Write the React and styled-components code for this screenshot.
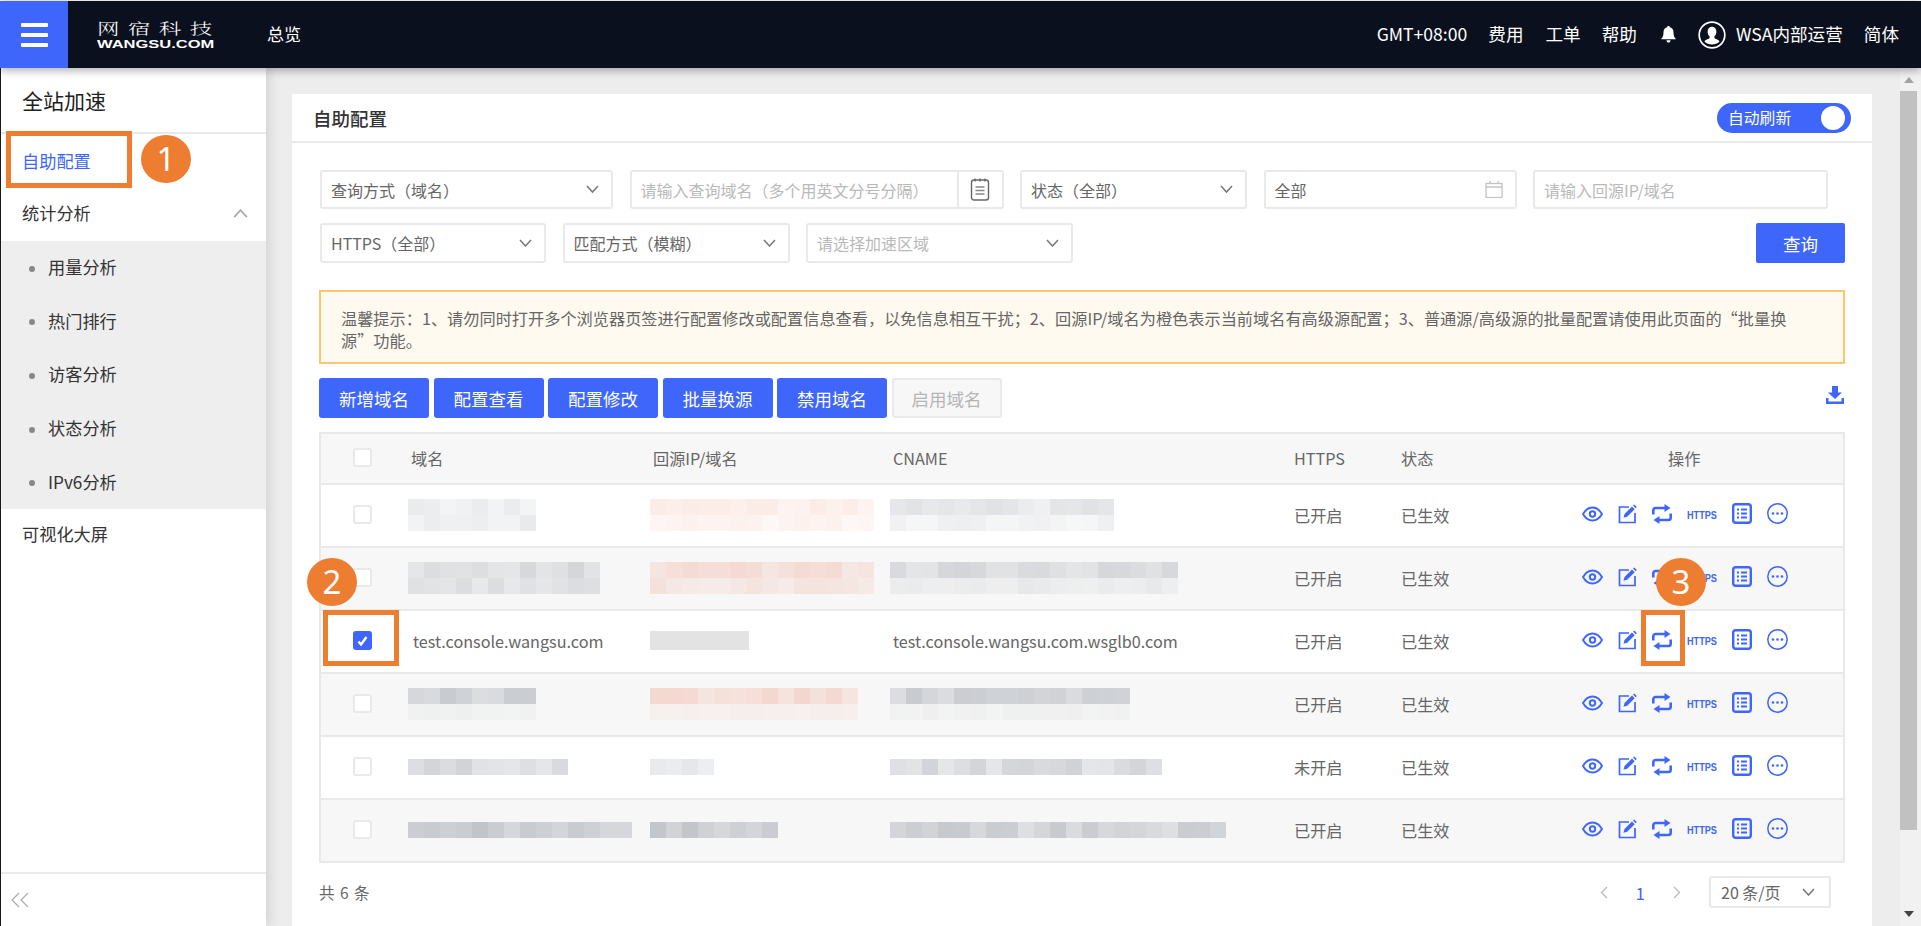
import React from 'react';
import styled, { createGlobalStyle } from 'styled-components';

const blue = '#3e66fb';
const orange = '#ed7d31';
const line = '#e9e9e9';

const GlobalStyle = createGlobalStyle`
	html, body {
		margin: 0;
		padding: 0;
		height: 100%;
		overflow: hidden;
		background: #fff;
		font-family: "Noto Sans CJK SC", "Noto Sans", sans-serif;
		color: #666;
	}
	* {
		box-sizing: border-box;
	}
`;

const Page = styled.div`
	position: relative;
	height: 926px;
	padding-top: 1px;
	display: flex;
	flex-direction: column;
	overflow: hidden;
`;

/* top bar */
const TopBar = styled.header`
	height: 67px;
	flex: none;
	display: flex;
	align-items: center;
	background: #0b101e;
	color: #fff;
	position: relative;
	z-index: 3;
	box-shadow: 0 2px 9px rgba(0, 0, 0, 0.35);
`;
const MenuButton = styled.div`
	width: 68px;
	height: 100%;
	background: ${blue};
	display: flex;
	flex-direction: column;
	justify-content: center;
	align-items: center;
	gap: 6px;
`;
const MenuBar = styled.span`
	width: 27px;
	height: 4px;
	border-radius: 1px;
	background: #fff;
`;
const Logo = styled.div`
	width: 118px;
	margin: 0 52px 0 29px;
	display: flex;
	flex-direction: column;
	align-items: flex-start;
`;
const LogoName = styled.span`
	font-family: "Noto Serif CJK SC", "Noto Sans CJK SC", serif;
	font-size: 15px;
	line-height: 17px;
	font-weight: 300;
	letter-spacing: 5.6px;
	white-space: nowrap;
	transform: scaleX(1.5);
	transform-origin: left center;
`;
const LogoDomain = styled.span`
	font-family: "Liberation Sans", sans-serif;
	font-weight: 700;
	font-size: 11px;
	line-height: 12px;
	margin-top: 2px;
	white-space: nowrap;
	transform: scaleX(1.5);
	transform-origin: left center;
`;
const TopLink = styled.span`
	font-size: ${({ $size }) => $size || 17.6}px;
	line-height: 20px;
	margin-left: ${({ $gap }) => $gap || 0}px;
	margin-bottom: 2px;
	white-space: nowrap;
`;
const TopIcon = styled.span`
	display: flex;
	margin-left: ${({ $gap }) => $gap}px;
`;
const TopRight = styled.div`
	margin-left: auto;
	padding-right: 22px;
	display: flex;
	align-items: center;
`;

/* page body */
const Body = styled.div`
	flex: 1;
	min-height: 0;
	display: flex;
`;
const Sidebar = styled.aside`
	width: 266px;
	flex: none;
	display: flex;
	flex-direction: column;
	background: #fff;
	border-left: 1px solid #1a1a1a;
	position: relative;
	z-index: 2;
	box-shadow: 3px 0 12px rgba(0, 0, 0, 0.12);
	color: #333;
`;
const SideTitle = styled.div`
	height: 66px;
	flex: none;
	padding: 17px 0 0 21px;
	font-size: 21px;
	line-height: 30px;
	color: #222;
	border-bottom: 2px solid ${line};
`;
const SideItem = styled.div`
	height: ${({ $h }) => $h || 54}px;
	flex: none;
	padding-left: 21px;
	display: flex;
	align-items: center;
	justify-content: space-between;
	font-size: 17.2px;
	color: ${({ $active }) => ($active ? blue : '#333')};
`;
const SideGroupLabel = styled.span`
	margin-bottom: 3px;
`;
const SideCaret = styled.span`
	display: flex;
	padding-right: 18px;
`;
const SubMenu = styled.div`
	height: 268px;
	flex: none;
	background: #eee;
	display: flex;
	flex-direction: column;
`;
const SubItem = styled.div`
	height: 53.6px;
	padding: 0 0 2px 47px;
	display: flex;
	align-items: center;
	font-size: 17.2px;
	color: #333;
	position: relative;
	&::before {
		content: '';
		position: absolute;
		left: 28px;
		top: 50%;
		width: 6px;
		height: 6px;
		margin-top: -2px;
		border-radius: 50%;
		background: #888;
	}
`;
const SideFooter = styled.div`
	margin-top: auto;
	height: 54px;
	flex: none;
	border-top: 2px solid ${line};
	padding-left: 10px;
	display: flex;
	align-items: center;
	color: #999;
`;
const Content = styled.main`
	flex: 1;
	min-width: 0;
	background: #ededed;
	padding: 26px 28px 0 26px;
`;
const Card = styled.section`
	background: #fff;
	height: 100%;
	padding: 0 27px 0 27px;
	margin-bottom: -30px;
`;
const CardHeader = styled.div`
	height: 49px;
	margin: 0 -27px;
	padding: 0 21px 0 21px;
	display: flex;
	align-items: center;
	justify-content: space-between;
	border-bottom: 2px solid ${line};
`;
const CardTitle = styled.h2`
	margin: 0;
	font-size: 18.5px;
	font-weight: 500;
	color: #333;
`;
const Toggle = styled.div`
	width: 134px;
	height: 30px;
	border-radius: 15px;
	background: ${blue};
	color: #fff;
	font-size: 15.8px;
	padding: 0 6px 0 11px;
	display: flex;
	align-items: center;
	justify-content: space-between;
`;
const Knob = styled.span`
	width: 24px;
	height: 24px;
	border-radius: 50%;
	background: #fff;
`;

/* filters */
const Filters = styled.div`
	padding: 27px 0 0 1px;
	display: flex;
	flex-direction: column;
	gap: 14px;
`;
const FilterRow = styled.div`
	display: flex;
	height: ${({ $h }) => $h}px;
	gap: 16.5px;
`;
const Field = styled.div`
	width: ${({ $w }) => $w}px;
	height: 100%;
	flex: none;
	border: 2px solid ${line};
	border-radius: 3px;
	background: #fff;
	padding: 0 12px 0 9px;
	display: flex;
	align-items: center;
	justify-content: space-between;
	font-size: 16px;
	white-space: nowrap;
	color: ${({ $empty }) => ($empty ? '#b9b9b9' : '#666')};
`;
const FieldAddon = styled.div`
	width: 45px;
	margin: 0 -12px 0 0;
	align-self: stretch;
	border-left: 2px solid ${line};
	display: flex;
	align-items: center;
	justify-content: center;
`;
const QueryButton = styled.button`
	margin-left: auto;
	width: 89px;
	height: 40px;
	border: 0;
	border-radius: 2px;
	background: ${blue};
	color: #fff;
	font: inherit;
	font-size: 17.5px;
`;
const Notice = styled.div`
	margin-top: 27px;
	height: 74px;
	padding: 15px 50px 0 20px;
	border: 2px solid #fcc671;
	background: #fffaf0;
	font-size: 16.2px;
	line-height: 22px;
	color: #666;
`;

/* toolbar */
const Toolbar = styled.div`
	margin-top: 14px;
	height: 40px;
	display: flex;
	align-items: center;
	gap: 4.5px;
`;
const ToolButton = styled.button`
	width: 110px;
	height: 40px;
	border-radius: 3px;
	border: ${({ disabled }) => (disabled ? `2px solid ${line}` : 0)};
	background: ${({ disabled }) => (disabled ? '#f7f7f7' : blue)};
	color: ${({ disabled }) => (disabled ? '#b5b5b5' : '#fff')};
	font: inherit;
	font-size: 17.5px;
	padding: 0;
`;
const DownloadLink = styled.span`
	margin-left: auto;
	display: flex;
	padding-bottom: 6px;
`;

/* table */
const Table = styled.div`
	margin-top: 14px;
	border: 2px solid ${line};
	border-bottom-width: 0;
`;
const Row = styled.div`
	display: grid;
	grid-template-columns: 87px 242px 240px 404px 107px 181px 1fr;
	height: ${({ $h }) => $h || 63}px;
	padding-bottom: 2px;
	align-items: center;
	border-bottom: 2px solid ${line};
	background: ${({ $tint }) => ($tint ? '#f7f7f7' : '#fff')};
	font-size: 16.2px;
	color: #666;
`;
const CheckCell = styled.div`
	display: flex;
	justify-content: center;
	padding-right: 4px;
`;
const CheckBox = styled.span`
	width: 19px;
	height: 19px;
	border-radius: 3px;
	border: ${({ $on }) => ($on ? '0' : `2px solid ${line}`)};
	background: ${({ $on }) => ($on ? blue : '#fff')};
	display: flex;
	align-items: center;
	justify-content: center;
`;
const TextCell = styled.div`
	padding-left: ${({ $pad }) => $pad ?? 3}px;
	white-space: nowrap;
`;
const Mosaic = styled.div`
	display: flex;
	flex-direction: column;
`;
const MosaicLine = styled.div`
	display: flex;
`;
const Tile = styled.i`
	width: 16px;
	height: 16px;
`;
const Masked = styled.div`
	width: 99px;
	height: 19px;
	background: #e3e3e3;
`;
const Actions = styled.div`
	display: flex;
	align-items: center;
	gap: 15px;
	padding-bottom: 2px;
	color: ${blue};
`;
const HttpsTag = styled.span`
	width: 30px;
	font-family: "Liberation Sans", sans-serif;
	font-weight: 700;
	font-size: 11px;
	line-height: 12px;
	white-space: nowrap;
	padding-top: 2px;
	transform: scaleX(0.83);
	transform-origin: left center;
`;

/* pager */
const Footer = styled.div`
	height: 58px;
	display: flex;
	align-items: center;
	font-size: 15.5px;
`;
const Total = styled.span`
	letter-spacing: 1px;
`;
const Pager = styled.div`
	margin-left: auto;
	display: flex;
	align-items: center;
	padding-right: 14px;
`;
const PageNumber = styled.span`
	color: ${blue};
	font-size: 17px;
	margin: 0 28px;
`;
const SizeSelect = styled.div`
	width: 122px;
	height: 32px;
	margin-left: 28px;
	border: 2px solid ${line};
	border-radius: 3px;
	padding: 0 14px 0 10px;
	display: flex;
	align-items: center;
	justify-content: space-between;
	font-size: 16px;
	color: #666;
`;

/* fake browser scrollbar */
const ScrollTrack = styled.div`
	width: 21px;
	flex: none;
	background: #f1f1f1;
	display: flex;
	flex-direction: column;
	align-items: center;
	padding: 9px 4px 9px 0;
`;
const ScrollThumb = styled.div`
	width: 17px;
	height: 739px;
	margin-top: 8px;
	background: #c1c1c1;
`;
const ScrollArrow = styled.span`
	width: 0;
	height: 0;
	border-left: 5px solid transparent;
	border-right: 5px solid transparent;
	${({ $down }) => ($down ? 'border-top: 6px solid #444; margin-top: auto;' : 'border-bottom: 6px solid #a3a3a3;')}
`;

/* orange tutorial marks laid over the page */
const Frame = styled.div`
	position: absolute;
	left: ${({ $x }) => $x}px;
	top: ${({ $y }) => $y}px;
	width: ${({ $w }) => $w}px;
	height: ${({ $h }) => $h}px;
	border: 5px solid ${orange};
	z-index: 5;
`;
const Badge = styled.div`
	position: absolute;
	left: ${({ $x }) => $x}px;
	top: ${({ $y }) => $y}px;
	width: 50px;
	height: 48px;
	border-radius: 50%;
	background: ${orange};
	color: #fff;
	font-family: "Noto Sans", sans-serif;
	font-size: 33px;
	line-height: 47px;
	text-align: center;
	z-index: 5;
`;

const Chevron = ({ up, size = 13, color = '#777' }) => (
	<svg width={size} height={size * 0.62} viewBox="0 0 13 8" fill="none" stroke={color} strokeWidth="1.5">
		<path d={up ? 'M1 7l5.5-6L12 7' : 'M1 1l5.5 6L12 1'} />
	</svg>
);

const Side = ({ left, color = '#bbb' }) => (
	<svg width="8" height="13" viewBox="0 0 8 13" fill="none" stroke={color} strokeWidth="1.4">
		<path d={left ? 'M7 1L1.5 6.5 7 12' : 'M1 1l5.5 5.5L1 12'} />
	</svg>
);

const Bell = () => (
	<svg width="15" height="17" viewBox="0 0 15 17" fill="#fff">
		<path d="M7.5 0c.8 0 1.3.5 1.4 1.2C11.300 1.800 12.500 3.700 12.500 6.200c0 3.100.6 4.900 2.100 6.300.3.300.1.800-.3.800H.7c-.4 0-.6-.5-.3-.8 1.500-1.400 2.100-3.200 2.100-6.300 0-2.500 1.200-4.400 3.600-5C6.200.5 6.700 0 7.500 0z" />
		<path d="M5.500 14.300h4c0 1.400-.9 2.300-2 2.300s-2-.9-2-2.300z" />
	</svg>
);

const UserIcon = () => (
	<svg width="28" height="28" viewBox="0 0 28 28" fill="none">
		<circle cx="14" cy="14" r="12.8" stroke="#fff" strokeWidth="1.7" />
		<path
			d="M14 5.800c2.700 0 4.400 2.100 4.400 4.900 0 1.900-.8 3.700-2 4.700v1c0 .6.400 1 1 1.300l2.800 1.200c.8.400 1.200 1 1.200 1.800-1.900 1.700-4.500 2.800-7.400 2.800s-5.500-1.100-7.400-2.800c0-.8.400-1.400 1.200-1.800l2.800-1.200c.6-.3 1-.7 1-1.300v-1c-1.200-1-2-2.800-2-4.700 0-2.800 1.700-4.900 4.400-4.900z"
			fill="#fff"
		/>
	</svg>
);

const Calendar = () => (
	<svg width="18" height="17" viewBox="0 0 18 17" fill="none" stroke="#c4c4c4" strokeWidth="1.3">
		<rect x="1" y="2.500" width="16" height="14" />
		<path d="M1 6h16M5 0v3M13 0v3" />
	</svg>
);

const NoteIcon = () => (
	<svg width="20" height="23" viewBox="0 0 20 23" fill="none" stroke="#666" strokeWidth="1.4">
		<rect x="1.500" y="2" width="17" height="20" rx="2.500" />
		<path d="M5 0.500v3M10 0.500v3M15 0.500v3" />
		<path d="M5.500 9h9M5.500 12.500h9M5.500 16h9" stroke="#888" />
	</svg>
);

const DownloadIcon = () => (
	<svg width="20" height="20" viewBox="0 0 20 20" fill={blue}>
		<path d="M7 1h6v6.500h4L10 14 3 7.500h4z" />
		<path d="M1 13h2.500v3.500h13V13H19v6H1z" />
	</svg>
);

const Eye = () => (
	<svg width="21" height="16" viewBox="0 0 21 16" fill="none" stroke="currentColor">
		<path d="M1 8c2.500-4.300 5.800-6.500 9.500-6.500S17.500 3.700 20 8c-2.500 4.300-5.800 6.500-9.500 6.500S3.500 12.300 1 8z" strokeWidth="1.900" />
		<circle cx="10.500" cy="8" r="2.700" strokeWidth="2" />
	</svg>
);

const EditIcon = () => (
	<svg width="19" height="20" viewBox="0 0 19 20" fill="none" stroke="currentColor">
		<path d="M11 3H1.500v15.500h15.500V9" strokeWidth="1.700" />
		<path d="M5.500 13.800l1-3.700L14 2.600l2.700 2.700-7.500 7.500z" fill="currentColor" stroke="none" />
		<path d="M15 1.600l1.200-1.200 2.600 2.600-1.200 1.300z" fill="currentColor" stroke="none" />
	</svg>
);

const SwapIcon = () => (
	<svg width="20" height="20" viewBox="0 0 20 20" fill="currentColor">
		<path d="M1.300 10.500V6.300C1.300 4.900 2.300 4 3.600 4H14" fill="none" stroke="currentColor" strokeWidth="2.600" />
		<path d="M12.500 0L18.500 4 12.500 8z" />
		<path d="M18.700 9.500v4.200c0 1.400-1 2.300-2.300 2.300H6" fill="none" stroke="currentColor" strokeWidth="2.600" />
		<path d="M7.500 12L1.500 16 7.500 20z" />
	</svg>
);

const ListIcon = () => (
	<svg width="20" height="21" viewBox="0 0 20 21" fill="none" stroke="currentColor">
		<rect x="1.200" y="1.200" width="17.600" height="18.600" rx="2.500" strokeWidth="2.400" />
		<path d="M5 6.500h2M9 6.500h6M5 10.500h2M9 10.500h6M5 14.500h2M9 14.500h6" strokeWidth="2" />
	</svg>
);

const MoreIcon = () => (
	<svg width="21" height="21" viewBox="0 0 21 21" fill="none" stroke="currentColor">
		<circle cx="10.500" cy="10.500" r="9.700" strokeWidth="1.500" />
		<circle cx="6" cy="10.500" r="1.300" fill="currentColor" stroke="none" />
		<circle cx="10.500" cy="10.500" r="1.300" fill="currentColor" stroke="none" />
		<circle cx="15" cy="10.500" r="1.300" fill="currentColor" stroke="none" />
	</svg>
);

const CheckMark = () => (
	<svg width="11" height="10" viewBox="0 0 11 10" fill="none" stroke="#fff" strokeWidth="2.400">
		<path d="M1.500 5.500l2.500 3L9.500 1" />
	</svg>
);

const CollapseIcon = () => (
	<svg width="18" height="16" viewBox="0 0 18 16" fill="none" stroke="#aaa" strokeWidth="1.200">
		<path d="M8 1L1 8l7 7M17 1l-7 7 7 7" />
	</svg>
);

// repeatable pseudo random shade, so the blurred cells look the same on every run
const shade = (seed, i) => {
	const n = Math.sin(seed * 12.9898 + i * 78.233) * 43758.5453;
	return n - Math.floor(n);
};

const tileColor = (tone, strength, seed, i) => {
	const a = strength * (0.6 + shade(seed, i) * 0.6);
	return tone === 'red' ? `rgba(238, 150, 125, ${a})` : `rgba(165, 170, 178, ${a})`;
};

const Blur = ({ cols, tone, lines, seed }) => (
	<Mosaic>
		{lines.map((strength, l) => (
			<MosaicLine key={l}>
				{Array.from({ length: cols }, (_, i) => (
					<Tile key={i} style={{ background: tileColor(tone, strength, seed + l, i) }} />
				))}
			</MosaicLine>
		))}
	</Mosaic>
);

const rows = [
	{ domain: [8, 'gray', [0.2, 0.22]], origin: [14, 'red', [0.16, 0.12]], cname: [14, 'gray', [0.3, 0.16]], https: '已开启' },
	{ domain: [12, 'gray', [0.35, 0.3]], origin: [14, 'red', [0.26, 0.18]], cname: [18, 'gray', [0.38, 0.16]], https: '已开启' },
	{ selected: true, domainText: 'test.console.wangsu.com', cnameText: 'test.console.wangsu.com.wsglb0.com', https: '已开启' },
	{ domain: [8, 'gray', [0.5, 0.08]], origin: [13, 'red', [0.28, 0.08]], cname: [15, 'gray', [0.5, 0.08]], https: '已开启' },
	{ domain: [10, 'gray', [0.45]], origin: [4, 'gray', [0.28]], cname: [17, 'gray', [0.45]], https: '未开启' },
	{ domain: [14, 'gray', [0.55]], origin: [8, 'gray', [0.55]], cname: [21, 'gray', [0.5]], https: '已开启' },
];

const tools = ['新增域名', '配置查看', '配置修改', '批量换源', '禁用域名'];
const subMenu = ['用量分析', '热门排行', '访客分析', '状态分析', 'IPv6分析'];

export default function App() {
	return (
		<Page>
			<GlobalStyle />
			<TopBar>
				<MenuButton>
					<MenuBar />
					<MenuBar />
					<MenuBar />
				</MenuButton>
				<Logo>
					<LogoName>网宿科技</LogoName>
					<LogoDomain>WANGSU.COM</LogoDomain>
				</Logo>
				<TopLink $size={17}>总览</TopLink>
				<TopRight>
					<TopLink>GMT+08:00</TopLink>
					<TopLink $gap={21}>费用</TopLink>
					<TopLink $gap={22}>工单</TopLink>
					<TopLink $gap={21}>帮助</TopLink>
					<TopIcon $gap={24}>
						<Bell />
					</TopIcon>
					<TopIcon $gap={22}>
						<UserIcon />
					</TopIcon>
					<TopLink $gap={10}>WSA内部运营</TopLink>
					<TopLink $gap={21}>简体</TopLink>
				</TopRight>
			</TopBar>
			<Body>
				<Sidebar>
					<SideTitle>全站加速</SideTitle>
					<SideItem $active $h={53}>自助配置</SideItem>
					<SideItem $h={54}>
						<SideGroupLabel>统计分析</SideGroupLabel>
						<SideCaret>
							<Chevron up size={15} color="#aaa" />
						</SideCaret>
					</SideItem>
					<SubMenu>
						{subMenu.map((name) => (
							<SubItem key={name}>{name}</SubItem>
						))}
					</SubMenu>
					<SideItem $h={48}>可视化大屏</SideItem>
					<SideFooter>
						<CollapseIcon />
					</SideFooter>
				</Sidebar>
				<Content>
					<Card>
						<CardHeader>
							<CardTitle>自助配置</CardTitle>
							<Toggle>
								自动刷新
								<Knob />
							</Toggle>
						</CardHeader>
						<Filters>
							<FilterRow $h={39}>
								<Field $w={293}>
									查询方式（域名）
									<Chevron />
								</Field>
								<Field $w={374} $empty>
									请输入查询域名（多个用英文分号分隔）
									<FieldAddon>
										<NoteIcon />
									</FieldAddon>
								</Field>
								<Field $w={227}>
									状态（全部）
									<Chevron />
								</Field>
								<Field $w={253}>
									全部
									<Calendar />
								</Field>
								<Field $w={295} $empty>
									请输入回源IP/域名
								</Field>
							</FilterRow>
							<FilterRow $h={40}>
								<Field $w={226}>
									HTTPS（全部）
									<Chevron />
								</Field>
								<Field $w={227}>
									匹配方式（模糊）
									<Chevron />
								</Field>
								<Field $w={267} $empty>
									请选择加速区域
									<Chevron />
								</Field>
								<QueryButton>查询</QueryButton>
							</FilterRow>
						</Filters>
						<Notice>
							温馨提示：1、请勿同时打开多个浏览器页签进行配置修改或配置信息查看，以免信息相互干扰；2、回源IP/域名为橙色表示当前域名有高级源配置；3、普通源/高级源的批量配置请使用此页面的“批量换源”功能。
						</Notice>
						<Toolbar>
							{tools.map((name) => (
								<ToolButton key={name}>{name}</ToolButton>
							))}
							<ToolButton disabled>启用域名</ToolButton>
							<DownloadLink>
								<DownloadIcon />
							</DownloadLink>
						</Toolbar>
						<Table>
							<Row $h={51} $tint>
								<CheckCell>
									<CheckBox />
								</CheckCell>
								<TextCell>域名</TextCell>
								<TextCell>回源IP/域名</TextCell>
								<TextCell>CNAME</TextCell>
								<TextCell $pad={0}>HTTPS</TextCell>
								<TextCell $pad={0}>状态</TextCell>
								<TextCell $pad={86}>操作</TextCell>
							</Row>
							{rows.map((row, i) => (
								<Row key={i} $tint={i % 2 === 1}>
									<CheckCell>
										<CheckBox $on={row.selected}>{row.selected && <CheckMark />}</CheckBox>
									</CheckCell>
									{row.selected ? (
										<>
											<TextCell $pad={5}>{row.domainText}</TextCell>
											<TextCell $pad={0}>
												<Masked />
											</TextCell>
											<TextCell>{row.cnameText}</TextCell>
										</>
									) : (
										<>
											<TextCell $pad={0}>
												<Blur cols={row.domain[0]} tone={row.domain[1]} lines={row.domain[2]} seed={i + 1} />
											</TextCell>
											<TextCell $pad={0}>
												<Blur cols={row.origin[0]} tone={row.origin[1]} lines={row.origin[2]} seed={i + 11} />
											</TextCell>
											<TextCell $pad={0}>
												<Blur cols={row.cname[0]} tone={row.cname[1]} lines={row.cname[2]} seed={i + 21} />
											</TextCell>
										</>
									)}
									<TextCell $pad={0}>{row.https}</TextCell>
									<TextCell $pad={0}>已生效</TextCell>
									<Actions>
										<Eye />
										<EditIcon />
										<SwapIcon />
										<HttpsTag>HTTPS</HttpsTag>
										<ListIcon />
										<MoreIcon />
									</Actions>
								</Row>
							))}
						</Table>
						<Footer>
							<Total>共 6 条</Total>
							<Pager>
								<Side left />
								<PageNumber>1</PageNumber>
								<Side />
								<SizeSelect>
									20 条/页
									<Chevron />
								</SizeSelect>
							</Pager>
						</Footer>
					</Card>
				</Content>
				<ScrollTrack>
					<ScrollArrow />
					<ScrollThumb />
					<ScrollArrow $down />
				</ScrollTrack>
			</Body>
			<Frame $x={6} $y={131} $w={126} $h={57} />
			<Badge $x={141} $y={135}>1</Badge>
			<Frame $x={323} $y={610} $w={76} $h={56} />
			<Badge $x={307} $y={558}>2</Badge>
			<Frame $x={1641} $y={610} $w={44} $h={56} />
			<Badge $x={1656} $y={558}>3</Badge>
		</Page>
	);
}
